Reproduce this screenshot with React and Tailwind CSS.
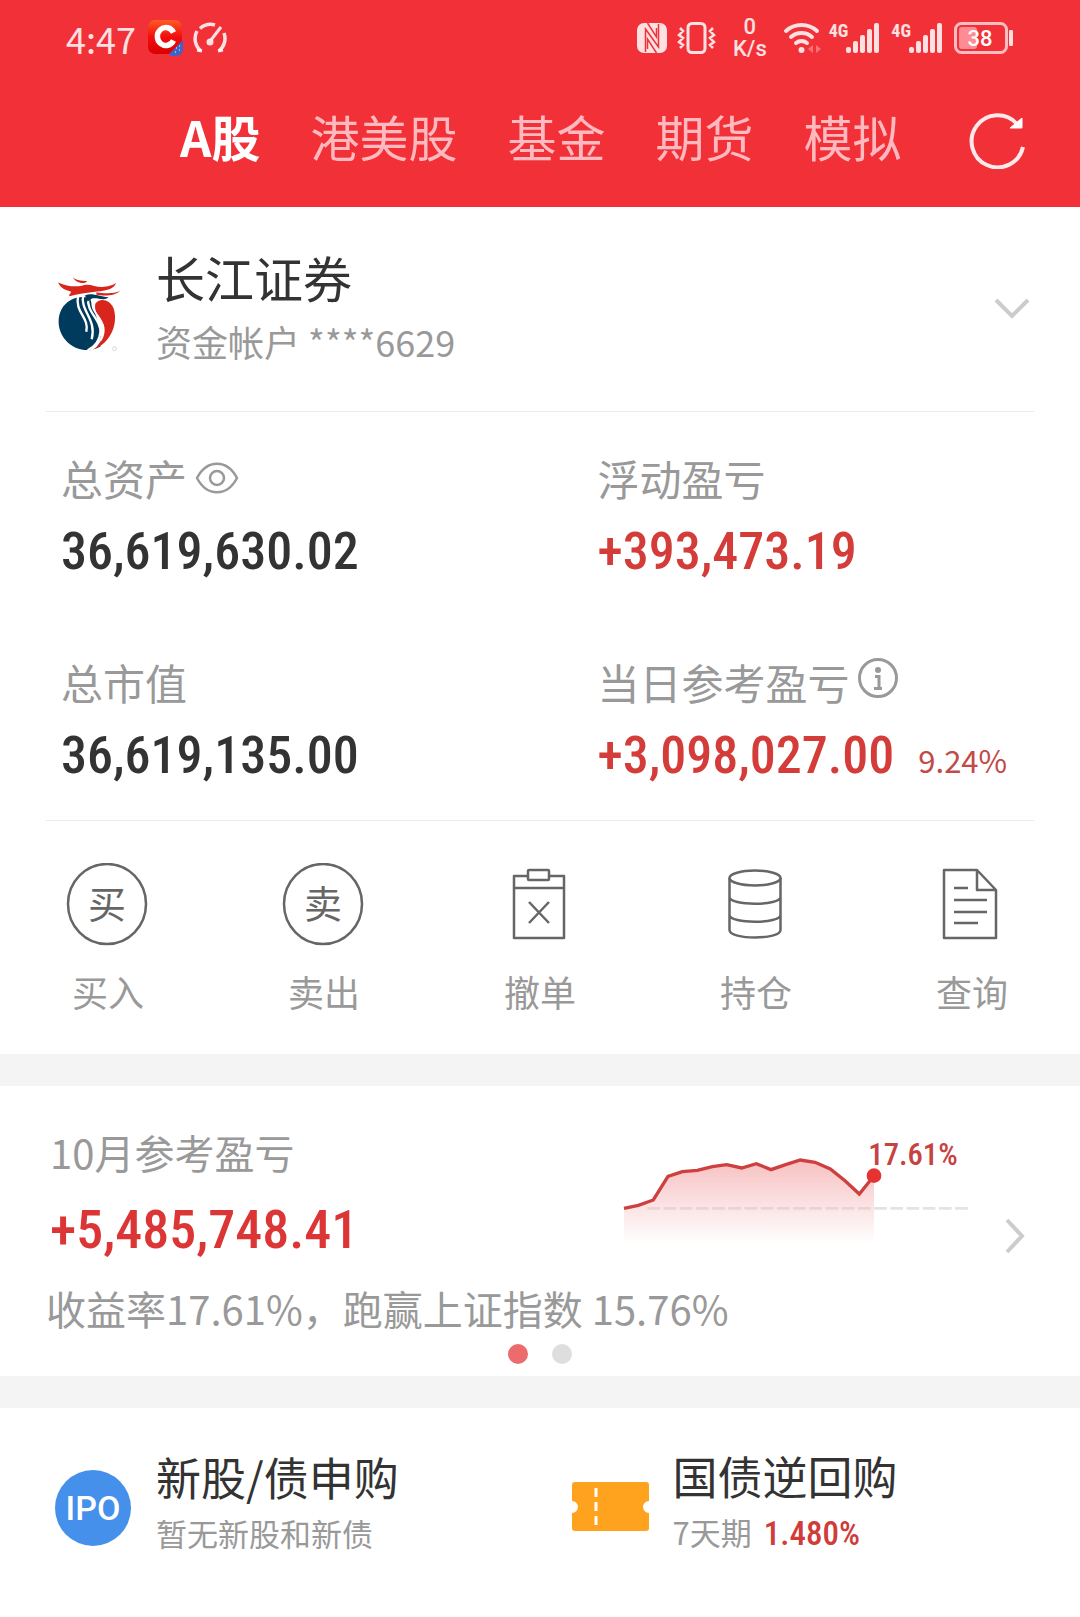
import React from "react";

const tabs = ["A股", "港美股", "基金", "期货", "模拟"];

const chartPoints = [
  [75, 235], [118, 226], [163, 210], [207, 139], [250, 125], [295, 121],
  [340, 110], [383, 104], [428, 114], [472, 101], [516, 119], [560, 104],
  [604, 90], [648, 97], [694, 117], [738, 152], [781, 192], [825, 137],
];

const SignalBars = () => (
  <div className="flex items-start">
    <span className="text-[18px] leading-[18px] font-bold font-['Roboto_Condensed',Roboto,sans-serif]">
      4G
    </span>
    <svg className="-ml-0.5" width="33" height="32" viewBox="0 0 33 32" fill="currentColor">
      <rect x="0" y="25" width="5" height="6" rx="2" />
      <rect x="7" y="19" width="5" height="12" rx="2" />
      <rect x="14" y="13" width="5" height="18" rx="2" />
      <rect x="21" y="7" width="5" height="24" rx="2" />
      <rect x="28" y="1" width="5" height="30" rx="2" />
    </svg>
  </div>
);

const StatusBar = () => (
  <div className="flex h-[76px] items-center justify-between px-[66px] text-white/85">
    <div className="flex items-center gap-2">
      <span className="mr-1 text-[36px] leading-10">4:47</span>
      <svg width="36" height="36" viewBox="0 0 36 36">
        <defs>
          <linearGradient id="app" x1="0" y1="0" x2="0" y2="1">
            <stop offset="0" stopColor="#ff5a26" />
            <stop offset="0.5" stopColor="#f20d0d" />
            <stop offset="1" stopColor="#d90000" />
          </linearGradient>
        </defs>
        <rect x="0" y="0" width="34" height="34" rx="7" fill="url(#app)" />
        <path d="M35 20v9a7 7 0 0 1-7 7h-5l-2-2z" fill="#3f63c8" />
        <path d="M25.500 12.500A8.500 9 0 1 0 25.500 20.500" fill="none" stroke="#fff" strokeWidth="5.500" />
        <path d="M28 28h1M31 26h1M27 32h1M31 30h1" stroke="#fff" strokeWidth="1" />
      </svg>
      <svg width="36" height="32" viewBox="0 0 36 32" fill="none" stroke="currentColor" strokeWidth="3.500">
        <path d="M9 29A16 16 0 0 1 5 9M8 6.500A16 16 0 0 1 23 3M32 11a16 16 0 0 1-5 18" />
        <path d="M5 28l5 1M31 28l-5 1" strokeWidth="3" />
        <path d="M19 18 29 5" strokeWidth="3" />
        <circle cx="18" cy="20" r="3.500" fill="currentColor" stroke="none" />
      </svg>
    </div>
    <div className="flex items-center">
      <svg width="30" height="30" viewBox="0 0 30 30">
        <rect width="30" height="30" rx="7" fill="currentColor" />
        <path d="M8.500 29V6L21.500 24V1M8.500 6 21.500 24" fill="none" stroke="#f23038" strokeWidth="1.500" />
        <path d="M10.500 0 19.500 14V5M19.500 30 10.500 16V26" fill="none" stroke="#f23038" strokeWidth="1.500" />
      </svg>
      <svg className="ml-2.5" width="40" height="32" viewBox="0 0 40 32" fill="none" stroke="currentColor" strokeWidth="3">
        <rect x="11" y="1.500" width="17" height="29" rx="4" />
        <path d="M3 6l3 3-4 4 4 3-4 4 4 3-3 3M36 6l-3 3 4 4-4 3 4 4-4 3 3 3" strokeWidth="2.500" />
      </svg>
      <div className="ml-4 flex flex-col items-center font-[Roboto,sans-serif] text-[22px] leading-[22px] font-medium">
        <span>0</span>
        <span>K/s</span>
      </div>
      <svg className="ml-4" width="40" height="34" viewBox="0 0 40 34" fill="none" stroke="currentColor" strokeWidth="4" strokeLinecap="round">
        <path d="M3 10a23 23 0 0 1 31 0M8 16a16 16 0 0 1 21 0M13 22a9 9 0 0 1 11 0" />
        <circle cx="18.500" cy="29" r="3" fill="currentColor" stroke="none" />
        <path d="M30 24v8l-5-4zM33 24v8l5-4z" fill="#ff7078" stroke="none" />
      </svg>
      <div className="ml-1.5 flex gap-3">
        <SignalBars />
        <SignalBars />
      </div>
      <svg className="ml-3" width="60" height="32" viewBox="0 0 60 32">
        <rect x="1.500" y="1.500" width="51" height="29" rx="6" fill="none" stroke="currentColor" strokeWidth="3" opacity="0.8" />
        <rect x="5" y="5" width="18" height="22" rx="3" fill="#ff8c92" />
        <rect x="55" y="8" width="4" height="16" rx="1" fill="currentColor" />
        <text x="26" y="24" textAnchor="middle" fontSize="22" fontWeight="500" fill="#fff" className="font-[Roboto,sans-serif]">
          38
        </text>
      </svg>
    </div>
  </div>
);

const BrokerLogo = () => (
  <svg width="66" height="78" viewBox="18 16 196 232" role="img" aria-label="长江证券">
    <path d="M62 93C20 115 14 175 46 212C74 245 120 250 150 232C160 180 130 130 120 90C100 80 80 84 62 93z" fill="#003a5d" />
    <path d="M135 104C150 86 178 92 189 118C205 165 178 232 115 244C150 232 166 200 162 175C158 150 128 135 135 104z" fill="#d8261c" />
    <path d="M84 80C72 130 118 145 108 188M99 78C88 125 140 150 124 210M114 84C106 130 152 150 150 188C148 215 135 232 112 243" fill="none" stroke="#fff" strokeWidth="7" />
    <path d="M127 96C118 130 156 140 158 175C160 205 142 230 122 243" fill="none" stroke="#fff" strokeWidth="5" />
    <path d="M24 41C50 52 70 55 95 51C115 41 140 58 160 54C178 52 190 48 196 42C194 60 165 66 140 68C110 72 80 76 58 82C54 76 68 70 60 67C46 64 32 58 24 41z" fill="#d8261c" />
    <path d="M66 19C68 36 95 36 111 37C105 48 72 45 66 19zM138 70C160 74 190 76 208 66C195 82 160 82 138 78z" fill="#d8261c" />
    <path d="M104 80C125 70 145 84 174 85C160 98 140 84 122 90L112 98z" fill="#003a5d" />
    <circle cx="192" cy="238" r="6" fill="none" stroke="#b9cbd8" strokeWidth="2" />
  </svg>
);

const Stat = ({ label, icon, value, extra, red }) => (
  <div>
    <div className="flex h-14 items-center gap-2 text-[42px] leading-[56px] text-[#999]">
      {label}
      {icon}
    </div>
    <div className="mt-4 flex items-baseline gap-6">
      <span
        className={`font-['Roboto_Condensed',Roboto,sans-serif] text-[52px] leading-[60px] font-medium ${
          red ? "text-[#d33c38]" : "text-[#333]"
        }`}
      >
        {value}
      </span>
      {extra && <span className="text-[31px] leading-[44px] text-[#c24a47]">{extra}</span>}
    </div>
  </div>
);

const EyeButton = () => (
  <button type="button" aria-label="隐藏金额">
    <svg width="44" height="32" viewBox="0 0 44 32" fill="none" stroke="#999" strokeWidth="2.500">
      <path d="M2 16C12-3 32-3 42 16C32 35 12 35 2 16z" />
      <circle cx="22" cy="16" r="7" />
    </svg>
  </button>
);

const InfoButton = () => (
  <button type="button" aria-label="说明" className="mb-2">
    <svg width="42" height="42" viewBox="0 0 42 42" fill="none" stroke="#999" strokeWidth="3">
      <circle cx="21" cy="21" r="18.500" />
      <circle cx="21" cy="13" r="3" fill="#999" stroke="none" />
      <path d="M18 19.500h4V31M17 31.500h8" />
    </svg>
  </button>
);

const RoundIcon = ({ text }) => (
  <svg width="84" height="84" viewBox="0 0 84 84">
    <ellipse cx="41" cy="41" rx="39" ry="40" fill="none" stroke="#666" strokeWidth="2.500" />
    <text x="41" y="55" textAnchor="middle" fontSize="38" fill="#666">{text}</text>
  </svg>
);

const line = {
  width: 84,
  height: 84,
  viewBox: "1 1 84 84",
  fill: "none",
  stroke: "#666",
  strokeWidth: 2.5,
  strokeLinejoin: "round",
};

const actions = [
  { label: "买入", icon: <RoundIcon text="买" /> },
  { label: "卖出", icon: <RoundIcon text="卖" /> },
  {
    label: "撤单",
    icon: (
      <svg {...line}>
        <path d="M31 14H17v62h50V14H52M17 26h50" />
        <rect x="31" y="8" width="21" height="10" rx="1" />
        <path d="M32 40 52 61M52 40 32 61" />
      </svg>
    ),
  },
  {
    label: "持仓",
    icon: (
      <svg {...line}>
        <ellipse cx="42" cy="16" rx="25.500" ry="7.500" />
        <path d="M16.500 16v52c0 10 51 10 51 0V16M16.500 35c0 9 51 9 51 0M16.500 53c0 9 51 9 51 0" />
      </svg>
    ),
  },
  {
    label: "查询",
    icon: (
      <svg {...line}>
        <path d="M48 8H15v68h52V28zV28h19" />
        <path d="M25 26h14M25 38h33M25 50h33M25 61h24" />
      </svg>
    ),
  },
];

const ProfitChart = () => {
  const points = chartPoints.map((p) => p.join(",")).join(" ");
  return (
    <svg width="350" height="115" viewBox="66 0 1050 345" role="img" aria-label="收益走势">
      <defs>
        <linearGradient id="area" x1="0" y1="0" x2="0" y2="1">
          <stop offset="0" stopColor="#f6b9ba" />
          <stop offset="1" stopColor="#f6b9ba" stopOpacity="0" />
        </linearGradient>
      </defs>
      <path d="M145 235H1110" stroke="#e3e3e3" strokeWidth="8" strokeDasharray="38 10.600" />
      <polygon points={`75,340 ${points} 825,340`} fill="url(#area)" opacity="0.9" />
      <polyline points={points} fill="none" stroke="#cf3f3f" strokeWidth="10" />
      <circle cx="825" cy="137" r="22" fill="#e63232" />
      <text
        x="808"
        y="105"
        fontSize="92"
        fontWeight="500"
        fill="#c54341"
        className="font-['Roboto_Condensed',Roboto,sans-serif]"
      >
        17.61%
      </text>
    </svg>
  );
};

const App = () => {
  return (
    <div className="min-h-screen bg-white font-['Noto_Sans_CJK_SC',sans-serif] text-[#333]">
      <header className="bg-[#f23038]">
        <StatusBar />
        {/* Market tabs */}
        <nav className="flex h-[131px] items-center justify-between pr-[54px] pb-1 pl-[180px]">
          <div className="flex gap-[50px] pb-2 text-[49px] leading-[64px]">
            {tabs.map((tab, i) => (
              <button
                key={tab}
                type="button"
                className={i === 0 ? "font-bold text-white" : "text-[#ffb9bf]"}
              >
                {tab}
              </button>
            ))}
          </div>
          <button type="button" aria-label="刷新">
            <svg width="57" height="58" viewBox="0 0 57 58" fill="none" stroke="#ffe9ea" strokeWidth="4">
              <path d="M54 36A26 26 0 1 1 48 13" />
              <path d="M53 7v10H41z" fill="#fff" stroke="#fff" strokeWidth="1" />
            </svg>
          </button>
        </nav>
      </header>

      {/* Account */}
      <section className="mx-[46px] flex h-[205px] items-center border-b border-[#ebebeb] pr-1 pl-[10px]">
        <div className="pt-2">
          <BrokerLogo />
        </div>
        <div className="ml-[34px] flex-1 pb-1">
          <h1 className="text-[49px] leading-[64px]">长江证券</h1>
          <p className="mt-1 text-[36px] leading-[56px] text-[#999]">资金帐户 ****6629</p>
        </div>
        <button type="button" aria-label="切换账户">
          <svg width="36" height="22" viewBox="0 0 36 22" fill="none" stroke="#ccc" strokeWidth="4">
            <path d="M2 2 18 18 34 2" />
          </svg>
        </button>
      </section>

      {/* Assets */}
      <section className="mx-[46px] grid grid-cols-[56%_44%] gap-y-[72px] border-b border-[#ebebeb] px-[15px] pt-[38px] pb-[34px]">
        <Stat label="总资产" icon={<EyeButton />} value="36,619,630.02" />
        <Stat label="浮动盈亏" value="+393,473.19" red />
        <Stat label="总市值" value="36,619,135.00" />
        <Stat label="当日参考盈亏" icon={<InfoButton />} value="+3,098,027.00" extra="9.24%" red />
      </section>

      {/* Actions */}
      <section className="grid grid-cols-5 pt-[42px] pb-[39px]">
        {actions.map((action) => (
          <button key={action.label} type="button" className="flex flex-col items-center gap-5">
            {action.icon}
            <span className="text-[36px] leading-[48px] text-[#999]">{action.label}</span>
          </button>
        ))}
      </section>

      {/* Monthly profit */}
      <section className="border-y-[32px] border-[#f4f4f4] pt-[38px] pb-3">
        <div className="flex items-center pr-[55px] pl-[46px]">
          <div className="flex-1">
            <div className="flex justify-between">
              <div className="pl-1">
                <h2 className="text-[40px] leading-[56px] text-[#999]">10月参考盈亏</h2>
                <p className="mt-5 font-['Roboto_Condensed',Roboto,sans-serif] text-[54px] leading-[60px] font-medium text-[#dc3535]">
                  +5,485,748.41
                </p>
              </div>
              <div className="pt-1.5 pr-[34px]">
                <ProfitChart />
              </div>
            </div>
            <p className="mt-5 text-[40px] leading-[56px] text-[#999]">收益率17.61%，跑赢上证指数 15.76%</p>
          </div>
          <button type="button" aria-label="查看详情" className="pt-3">
            <svg width="20" height="36" viewBox="0 0 20 36" fill="none" stroke="#ccc" strokeWidth="4">
              <path d="M2 2 17 18 2 34" />
            </svg>
          </button>
        </div>
        <div className="mt-2 flex justify-center gap-6">
          <span className="size-5 rounded-full bg-[#ec6c6e]" />
          <span className="size-5 rounded-full bg-[#dedede]" />
        </div>
      </section>

      {/* Products */}
      <section className="grid grid-cols-2 gap-2 pt-[38px] pb-10 pl-[55px]">
        <a href="#ipo" className="flex items-center gap-6">
          <svg className="mt-3" width="77" height="77" viewBox="0 0 77 77">
            <circle cx="38" cy="39" r="38" fill="#4590ea" />
            <text x="38" y="51" textAnchor="middle" fontSize="34" fontWeight="500" fill="#fff" className="font-[Roboto,sans-serif]">
              IPO
            </text>
          </svg>
          <div>
            <h3 className="text-[45px] leading-[60px]">新股/债申购</h3>
            <p className="mt-1 text-[31px] leading-[44px] text-[#999]">暂无新股和新债</p>
          </div>
        </a>
        <a href="#repo" className="flex items-center gap-6">
          <svg className="mt-3" width="77" height="50" viewBox="0 0 77 50">
            <path d="M3 0H74a3 3 0 0 1 3 3V19a6 6 0 0 0 0 12V46a3 3 0 0 1-3 3H3a3 3 0 0 1-3-3V31a6 6 0 0 0 0-12V3a3 3 0 0 1 3-3z" fill="#ffa31f" />
            <path d="M24 6v9M24 20v9M24 34v9" stroke="#fff" strokeWidth="3" />
          </svg>
          <div>
            <h3 className="text-[45px] leading-[60px]">国债逆回购</h3>
            <p className="mt-1 flex items-baseline gap-3 text-[31px] leading-[44px] text-[#999]">
              7天期
              <span className="font-['Roboto_Condensed',Roboto,sans-serif] text-[33px] font-medium text-[#cf3c3a]">
                1.480%
              </span>
            </p>
          </div>
        </a>
      </section>
    </div>
  );
};

export default App;
